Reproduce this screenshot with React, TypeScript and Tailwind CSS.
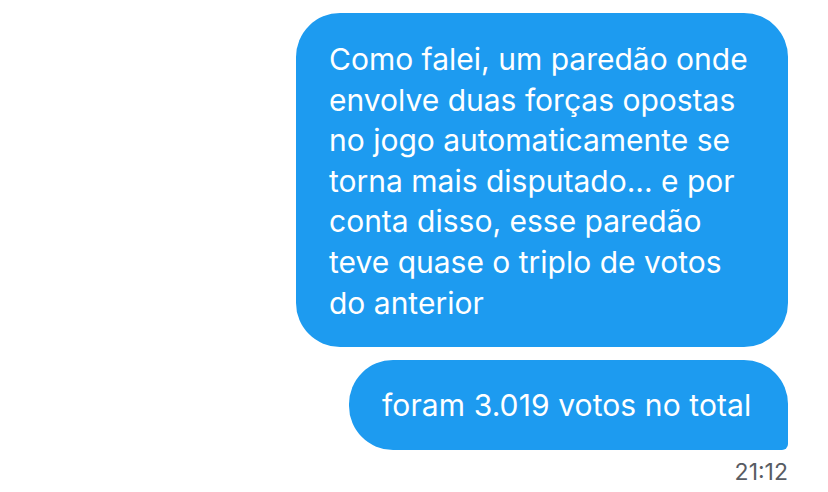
const lines = [
  "Como falei, um paredão onde",
  "envolve duas forças opostas",
  "no jogo automaticamente se",
  "torna mais disputado... e por",
  "conta disso, esse paredão",
  "teve quase o triplo de votos",
  "do anterior",
];

export default function App() {
  return (
    <div className="w-[828px] h-[492px] bg-white font-['Inter',sans-serif] overflow-hidden">
      <div className="flex flex-col items-end pr-10 pt-[13px]">
        <div className="w-[492px] rounded-[44px] bg-[#1d9bf0] pl-[33px] pr-4 pt-[26px] pb-[24px] text-white text-[30px] leading-[40.6px]">
          {lines.map((l) => (
            <div key={l} className="whitespace-nowrap">
              {l}
            </div>
          ))}
        </div>
        <div className="mt-[13px] w-[439px] rounded-[44px] rounded-br-[6px] bg-[#1d9bf0] pl-[33px] pt-[25px] pb-[25px] text-white text-[30px] leading-[40px] tracking-[0.1px] whitespace-nowrap">
          foram 3.019 votos no total
        </div>
        <div className="mt-[8px] text-[23px] leading-7 text-[#585c63]">21:12</div>
      </div>
    </div>
  );
}
